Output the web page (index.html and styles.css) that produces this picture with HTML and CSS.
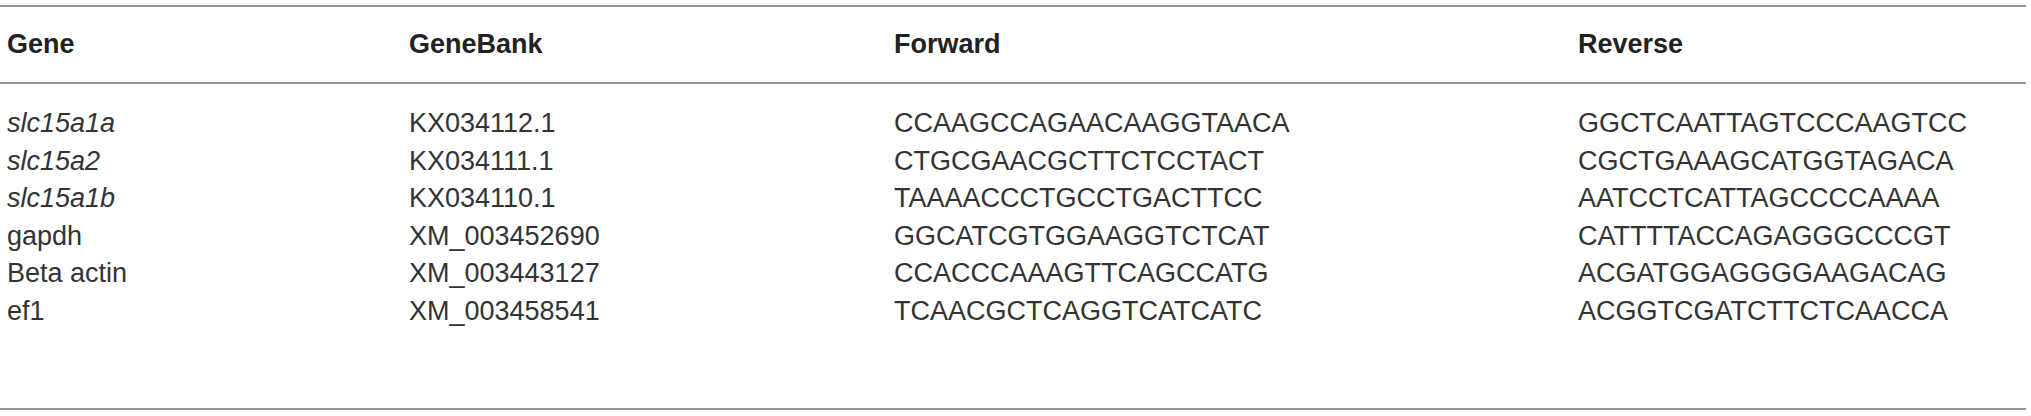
FILE: index.html
```html
<!DOCTYPE html>
<html>
<head>
<meta charset="utf-8">
<link rel="stylesheet" href="styles.css">
</head>
<body>
<div class="table">
  <div class="row head">
    <div>Gene</div><div>GeneBank</div><div>Forward</div><div>Reverse</div>
  </div>
  <div class="body">
    <div class="row"><div class="it">slc15a1a</div><div>KX034112.1</div><div>CCAAGCCAGAACAAGGTAACA</div><div>GGCTCAATTAGTCCCAAGTCC</div></div>
    <div class="row"><div class="it">slc15a2</div><div>KX034111.1</div><div>CTGCGAACGCTTCTCCTACT</div><div>CGCTGAAAGCATGGTAGACA</div></div>
    <div class="row"><div class="it">slc15a1b</div><div>KX034110.1</div><div>TAAAACCCTGCCTGACTTCC</div><div>AATCCTCATTAGCCCCAAAA</div></div>
    <div class="row"><div>gapdh</div><div>XM_003452690</div><div>GGCATCGTGGAAGGTCTCAT</div><div>CATTTTACCAGAGGGCCCGT</div></div>
    <div class="row"><div>Beta actin</div><div>XM_003443127</div><div>CCACCCAAAGTTCAGCCATG</div><div>ACGATGGAGGGGAAGACAG</div></div>
    <div class="row"><div>ef1</div><div>XM_003458541</div><div>TCAACGCTCAGGTCATCATC</div><div>ACGGTCGATCTTCTCAACCA</div></div>
  </div>
</div>
</body>
</html>
```

FILE: styles.css
```css
html, body {
  margin: 0;
  padding: 0;
  background: #ffffff;
}
body {
  font-family: "Liberation Sans", Arial, sans-serif;
  color: #333333;
}
.table {
  width: 2026px;
  margin-top: 5px;
  border-top: 2px solid #959595;
  border-bottom: 2px solid #959595;
}
.row {
  display: grid;
  grid-template-columns: 402px 485px 684px 1fr;
  padding-left: 7px;
  font-size: 27px;
  line-height: 37.6px;
}
.head {
  font-weight: bold;
  color: #222222;
  height: 77px;
  align-items: center;
  border-bottom: 2px solid #959595;
  box-sizing: border-box;
}
.body {
  padding-top: 21px;
  padding-bottom: 77px;
}
.it {
  font-style: italic;
}
```
